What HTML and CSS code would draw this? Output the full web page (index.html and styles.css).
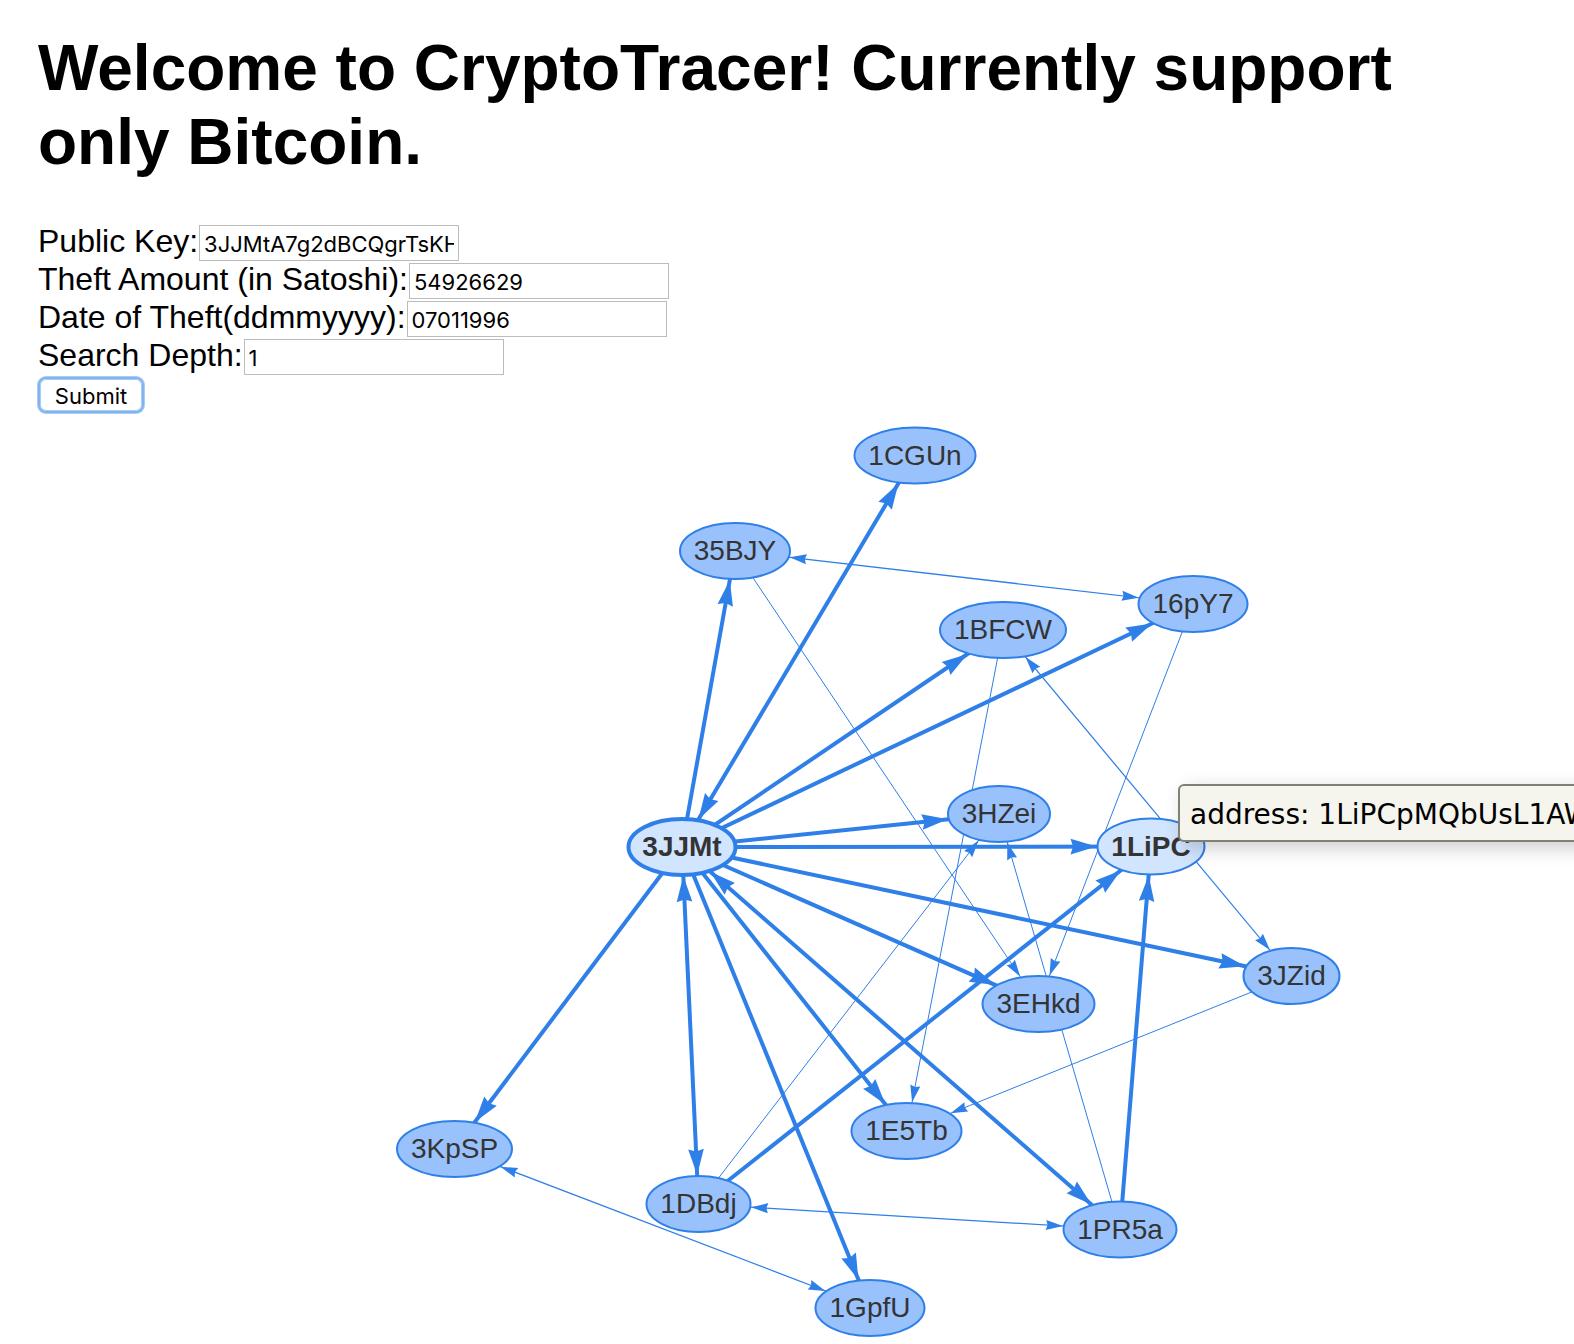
FILE: index.html
```
<!DOCTYPE html>
<html lang="en">
<head>
  <meta charset="utf-8">
  <title>CryptoTracer</title>
  <link rel="stylesheet" href="styles.css">
</head>
<body>
  <header class="intro">
    <h1 class="title">Welcome to CryptoTracer! Currently support only Bitcoin.</h1>
  </header>
  <form class="search">
    <div class="row"><label for="key">Public Key:</label><input class="field" id="key" type="text" value="3JJMtA7g2dBCQgrTsKH"></div>
    <div class="row"><label for="amount">Theft Amount (in Satoshi):</label><input class="field" id="amount" type="text" value="54926629"></div>
    <div class="row"><label for="date">Date of Theft(ddmmyyyy):</label><input class="field" id="date" type="text" value="07011996"></div>
    <div class="row"><label for="depth">Search Depth:</label><input class="field" id="depth" type="text" value="1"></div>
    <button class="submit" type="button">Submit</button>
  </form>
  <main class="network">
    <svg class="graph" id="graph" viewBox="0 415 1574 929" role="img" aria-label="Transaction graph"></svg>
    <div class="tooltip">address: 1LiPCpMQbUsL1AW</div>
  </main>
  <script src="graph.js"></script>
</body>
</html>
```
FILE: styles.css
```
body {
  margin: 0;
  background: #fff;
  color: #000;
  font-family: "Liberation Sans", Arial, sans-serif;
  font-size: 32px;
  overflow-x: hidden;
}

.intro {
  padding: 31px 38px 44px;
}

.title {
  margin: 0;
  font-size: 64px;
  line-height: 74px;
  font-weight: bold;
}

.search {
  padding: 0 38px;
}

.row {
  display: flex;
  align-items: flex-start;
  line-height: 36px;
}

.field {
  box-sizing: border-box;
  width: 260px;
  height: 36px;
  margin: 2px 0 0 1px;
  padding: 2px 4px 0;
  border: 1px solid #bcbcbc;
  border-radius: 0;
  background: #fff;
  color: #000;
  font-family: Inter, sans-serif;
  font-size: 22px;
}

.submit {
  display: block;
  width: 106px;
  height: 36px;
  margin: 2px 0;
  padding: 2px 0 0;
  border: 2px solid #85b3ea;
  border-radius: 8px;
  box-shadow: 0 0 0 1px #a3cdfb, inset 0 0 0 1px #a3cdfb;
  background: #fff;
  color: #000;
  font-family: Inter, sans-serif;
  font-size: 22px;
  line-height: 30px;
}

.network {
  position: relative;
  overflow: hidden;
}

.graph {
  display: block;
  width: 100%;
}

.edge {
  stroke: #2f7fe8;
  stroke-width: 1;
}

.edge-medium {
  stroke-width: 1.25;
}

.edge-thick {
  stroke-width: 4;
}

.arrow {
  fill: #2f7fe8;
}

.node {
  fill: #99c2fc;
  stroke: #2f7fe8;
  stroke-width: 2;
}

.node-active {
  fill: #d2e5ff;
}

.node-selected {
  stroke-width: 4;
}

.node-label {
  fill: #343434;
  font-size: 28px;
  text-anchor: middle;
}

.node-label-active {
  font-weight: bold;
}

.tooltip {
  position: absolute;
  left: 1178px;
  top: 369px;
  box-sizing: border-box;
  height: 58px;
  padding: 2px 10px 0;
  border: 2px solid #808074;
  border-radius: 6px;
  background: #f5f4ed;
  box-shadow: 6px 6px 20px rgba(0, 0, 0, 0.2);
  font-family: "DejaVu Sans", Verdana, sans-serif;
  font-size: 28px;
  line-height: 54px;
  white-space: nowrap;
}
```
FILE: graph.js
```
// Address nodes: centre x, centre y, horizontal radius, state
const nodes = {
  "1CGUn": [915, 455.5, 60.5],
  "35BJY": [735, 551, 55],
  "16pY7": [1193, 604, 54.5],
  "1BFCW": [1003, 630, 63],
  "3HZei": [999, 814, 51],
  "3JJMt": [682, 847, 53.5, "selected"],
  "1LiPC": [1151, 846.5, 53.5, "active"],
  "3JZid": [1291.5, 976, 48],
  "3EHkd": [1038.5, 1004, 56],
  "1E5Tb": [906.5, 1131, 55],
  "3KpSP": [454.5, 1149, 57.5],
  "1DBdj": [698.5, 1204, 52],
  "1PR5a": [1120, 1229.5, 56.5],
  "1GpfU": [870, 1308, 54.5]
};
const radiusY = 28;

// Transactions: from, to, weight, both directions
const edges = [
  ["35BJY", "3EHkd", "thin"],
  ["35BJY", "16pY7", "medium", true],
  ["16pY7", "3EHkd", "thin"],
  ["1BFCW", "1E5Tb", "thin"],
  ["1BFCW", "3JZid", "medium", true],
  ["3JZid", "1E5Tb", "thin"],
  ["1DBdj", "3HZei", "thin"],
  ["1PR5a", "3HZei", "thin"],
  ["1DBdj", "1PR5a", "medium", true],
  ["3KpSP", "1GpfU", "medium", true],
  ["3JJMt", "1CGUn", "thick", true],
  ["3JJMt", "35BJY", "thick"],
  ["3JJMt", "1BFCW", "thick"],
  ["3JJMt", "16pY7", "thick"],
  ["3JJMt", "3HZei", "thick"],
  ["3JJMt", "1LiPC", "thick"],
  ["3JJMt", "3JZid", "thick"],
  ["3JJMt", "3EHkd", "thick"],
  ["3JJMt", "1PR5a", "thick", true],
  ["3JJMt", "1E5Tb", "thick"],
  ["3JJMt", "1GpfU", "thick"],
  ["3JJMt", "1DBdj", "thick", true],
  ["3JJMt", "3KpSP", "thick"],
  ["1DBdj", "1LiPC", "thick"],
  ["1PR5a", "1LiPC", "thick"]
];

const graph = document.getElementById("graph");

function add(name, attributes, text) {
  const element = document.createElementNS("http://www.w3.org/2000/svg", name);
  for (const key in attributes) element.setAttribute(key, attributes[key]);
  if (text) element.textContent = text;
  graph.appendChild(element);
}

// Arrowhead whose tip touches the border of the target ellipse
function addArrow(from, to, length) {
  const angle = Math.atan2(to[1] - from[1], to[0] - from[0]);
  const cos = Math.cos(angle);
  const sin = Math.sin(angle);
  const reach = 1 + to[2] * radiusY / Math.hypot(radiusY * cos, to[2] * sin);
  const x = to[0] - reach * cos;
  const y = to[1] - reach * sin;
  const points = [[0, 0], [-1, 0.3], [-0.9, 0], [-1, -0.3]].map(([u, v]) =>
    (x + length * (u * cos - v * sin)).toFixed(1) + "," +
    (y + length * (u * sin + v * cos)).toFixed(1));
  add("polygon", { class: "arrow", points: points.join(" ") });
}

for (const [a, b, weight, both] of edges) {
  const from = nodes[a];
  const to = nodes[b];
  const length = weight === "thick" ? 26 : 17;
  add("line", { class: "edge edge-" + weight, x1: from[0], y1: from[1], x2: to[0], y2: to[1] });
  addArrow(from, to, length);
  if (both) addArrow(to, from, length);
}

for (const name in nodes) {
  const [x, y, rx, state] = nodes[name];
  add("ellipse", {
    class: "node" + (state ? " node-active node-" + state : ""),
    cx: x, cy: y, rx: rx, ry: radiusY
  });
  add("text", { class: "node-label" + (state ? " node-label-active" : ""), x: x, y: Math.floor(y + 9.5) }, name);
}
```
